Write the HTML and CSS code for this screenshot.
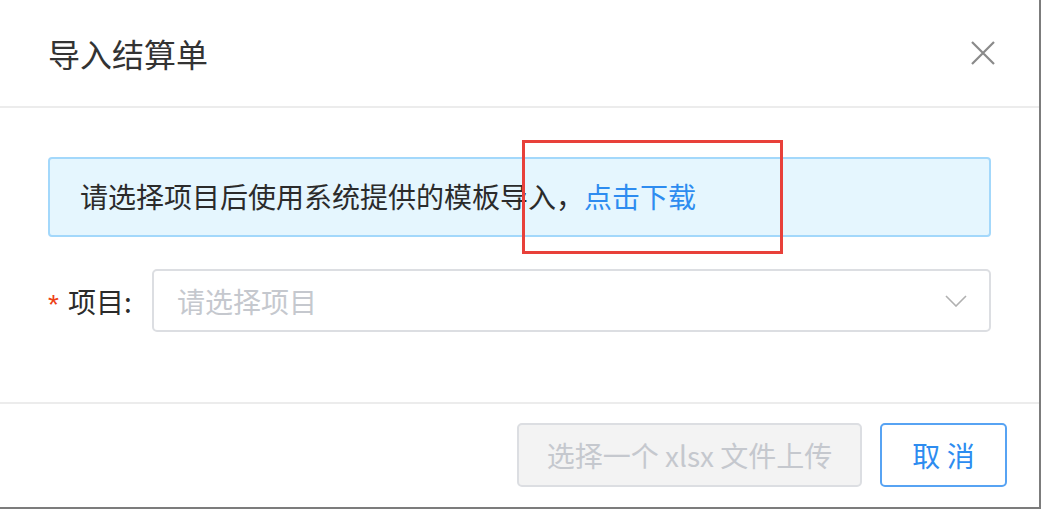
FILE: index.html
```html
<!DOCTYPE html>
<html lang="zh-CN">
<head>
    <meta charset="UTF-8">
    <meta name="viewport" content="width=device-width, initial-scale=1.0">
    <title>导入结算单</title>
    <link rel="stylesheet" href="styles.css">
</head>
<body>
    <div class="modal">
        <div class="modal-header">
            <h2>导入结算单</h2>
            <span class="modal-close">
                <svg width="24" height="24" viewBox="0 0 24 24"><path d="M1 1 L23 23 M23 1 L1 23" stroke="#8a8a8a" stroke-width="2.2" fill="none"/></svg>
            </span>
        </div>
        <div class="modal-body">
            <div class="alert">请选择项目后使用系统提供的模板导入，<a href="#">点击下载</a></div>
            <div class="form-row">
                <label class="form-label"><span class="required">*</span>项目:</label>
                <div class="select">
                    <span class="placeholder">请选择项目</span>
                    <svg class="arrow" width="22" height="12" viewBox="0 0 22 12"><path d="M1 1 L11 11 L21 1" stroke="#b0b0b0" stroke-width="1.6" fill="none"/></svg>
                </div>
            </div>
        </div>
        <div class="modal-footer">
            <button class="button button-disabled">选择一个 xlsx 文件上传</button>
            <button class="button button-ghost">取 消</button>
        </div>
        <div class="highlight"></div>
    </div>
</body>
</html>
```

FILE: styles.css
```css
body {
    margin: 0;
    padding: 0;
    background-color: #fff;
    font-family: "Noto Sans CJK SC", "Noto Sans", sans-serif;
    color: #333;
}
.modal {
    position: relative;
    width: 1041px;
    height: 509px;
    box-sizing: border-box;
    background-color: #fff;
    border-right: 2px solid #7c7c7c;
    border-bottom: 2px solid #7c7c7c;
    display: flex;
    flex-direction: column;
}
.modal-header {
    height: 106px;
    border-bottom: 2px solid #ececec;
    display: flex;
    align-items: center;
    justify-content: space-between;
    padding: 0 44px 0 48px;
}
.modal-header h2 {
    margin: 0;
    font-size: 32px;
    font-weight: normal;
    color: #333;
    line-height: 1;
}
.modal-close {
    display: flex;
}
.modal-body {
    height: 294px;
    box-sizing: border-box;
    padding: 49px 48px 0 48px;
}
.alert {
    height: 80px;
    box-sizing: border-box;
    border: 2px solid #a3d8fb;
    background-color: #e5f6fe;
    border-radius: 4px;
    padding: 0 0 2px 30px;
    display: flex;
    align-items: center;
    font-size: 28px;
    color: #2b2b2b;
}
.alert a {
    color: #2d8cf0;
    text-decoration: none;
}
.form-row {
    display: flex;
    align-items: center;
    margin-top: 32px;
}
.form-label {
    width: 104px;
    display: flex;
    align-items: center;
    font-size: 28px;
    color: #2b2b2b;
}
.required {
    color: #ed4014;
    font-family: "Liberation Sans", sans-serif;
    font-size: 28px;
    margin-right: 9px;
    margin-top: 8px;
}
.select {
    flex: 1;
    height: 63px;
    box-sizing: border-box;
    border: 2px solid #dcdee2;
    border-radius: 5px;
    display: flex;
    align-items: center;
    justify-content: space-between;
    padding: 0 22px 0 23px;
}
.placeholder {
    font-size: 28px;
    color: #c5c8ce;
}
.modal-footer {
    flex: 1;
    border-top: 2px solid #ececec;
    display: flex;
    justify-content: flex-end;
    align-items: flex-start;
    gap: 18px;
    padding: 19px 32px 0 0;
}
.button {
    height: 64px;
    box-sizing: border-box;
    border-radius: 5px;
    font-family: "Noto Sans CJK SC", "Noto Sans", sans-serif;
    font-size: 28px;
    padding: 0;
    white-space: nowrap;
    cursor: pointer;
}
.button-disabled {
    width: 345px;
    background-color: #f3f3f3;
    border: 2px solid #dcdee2;
    color: #c5c8ce;
}
.button-ghost {
    width: 127px;
    background-color: #fff;
    border: 2px solid #57a3f3;
    color: #2d8cf0;
}
.highlight {
    position: absolute;
    left: 522px;
    top: 140px;
    width: 261px;
    height: 114px;
    box-sizing: border-box;
    border: 3px solid #e8403a;
}
```
